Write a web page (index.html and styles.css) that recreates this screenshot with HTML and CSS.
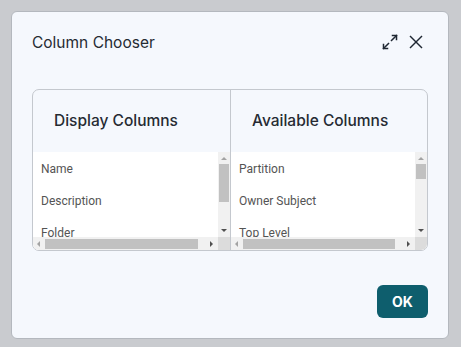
FILE: index.html
```html
<!DOCTYPE html>
<html lang="en">
<head>
    <meta charset="UTF-8">
    <meta name="viewport" content="width=device-width, initial-scale=1.0">
    <title>Column Chooser</title>
    <link rel="stylesheet" href="styles.css">
</head>
<body>

    <div class="dialog">
        <!-- header start -->
        <div class="dialog-header">
            <h1 class="dialog-title">Column Chooser</h1>
            <div class="dialog-tools">
                <button class="tool-btn" title="Maximize">
                    <svg width="18" height="18" viewBox="0 0 18 18" fill="none" stroke="#1f2733" stroke-width="1.5" stroke-linecap="square">
                        <path d="M11.5 2.5h4v4"/>
                        <path d="M15.5 2.5l-5 5"/>
                        <path d="M6.5 15.5h-4v-4"/>
                        <path d="M2.5 15.5l5-5"/>
                    </svg>
                </button>
                <button class="tool-btn" title="Close">
                    <svg width="18" height="18" viewBox="0 0 18 18" fill="none" stroke="#1f2733" stroke-width="1.4">
                        <path d="M3 3l12 12"/>
                        <path d="M15 3L3 15"/>
                    </svg>
                </button>
            </div>
        </div>
        <!-- header end -->

        <!-- chooser panel start -->
        <div class="chooser">
            <div class="pane">
                <div class="pane-head">Display Columns</div>
                <div class="pane-body">
                    <ul class="col-list">
                        <li>Name</li>
                        <li>Description</li>
                        <li>Folder</li>
                    </ul>
                    <div class="vscroll">
                        <span class="arrow arrow-up"></span>
                        <div class="vtrack"><div class="vthumb thumb-long"></div></div>
                        <span class="arrow arrow-down"></span>
                    </div>
                    <div class="hscroll">
                        <span class="arrow arrow-left"></span>
                        <div class="htrack"><div class="hthumb"></div></div>
                        <span class="arrow arrow-right"></span>
                    </div>
                    <div class="corner"></div>
                </div>
            </div>

            <div class="pane">
                <div class="pane-head">Available Columns</div>
                <div class="pane-body">
                    <ul class="col-list">
                        <li>Partition</li>
                        <li>Owner Subject</li>
                        <li>Top Level</li>
                    </ul>
                    <div class="vscroll">
                        <span class="arrow arrow-up"></span>
                        <div class="vtrack"><div class="vthumb thumb-short"></div></div>
                        <span class="arrow arrow-down"></span>
                    </div>
                    <div class="hscroll">
                        <span class="arrow arrow-left"></span>
                        <div class="htrack"><div class="hthumb"></div></div>
                        <span class="arrow arrow-right"></span>
                    </div>
                    <div class="corner"></div>
                </div>
            </div>
        </div>
        <!-- chooser panel end -->

        <div class="dialog-footer">
            <button class="ok-btn">OK</button>
        </div>
    </div>

</body>
</html>
```

FILE: styles.css
```css
body {
    margin: 0;
    padding: 11px;
    background: #c9cbcf;
    font-family: Inter, "Noto Sans", sans-serif;
}

.dialog {
    width: 438px;
    height: 328px;
    box-sizing: border-box;
    background: #f5f8fd;
    border: 1px solid #b4b8be;
    border-radius: 6px;
    padding: 19px 20px 20px 20px;
    display: flex;
    flex-direction: column;
}

.dialog-header {
    height: 22px;
    display: flex;
    align-items: center;
    justify-content: space-between;
}

.dialog-title {
    margin: 0;
    font-size: 15.5px;
    font-weight: 400;
    color: #262b33;
}

.dialog-tools {
    display: flex;
    gap: 8px;
    margin-right: 3px;
}

.tool-btn {
    background: transparent;
    border: none;
    padding: 0;
    width: 18px;
    height: 18px;
    display: flex;
    cursor: pointer;
}

/* two column chooser */

.chooser {
    margin-top: 36px;
    height: 162px;
    box-sizing: border-box;
    border: 1px solid #c4c8ce;
    border-radius: 7px;
    overflow: hidden;
    display: grid;
    grid-template-columns: 1fr 1fr;
}

.pane {
    display: grid;
    grid-template-rows: 62px minmax(0, 1fr);
    min-width: 0;
    min-height: 0;
}

.pane + .pane {
    border-left: 1px solid #c4c8ce;
}

.pane-head {
    display: flex;
    align-items: center;
    padding-left: 21px;
    padding-bottom: 2px;
    font-size: 15.5px;
    font-weight: 450;
    color: #262b33;
}

.pane-body {
    background: #fff;
    display: grid;
    grid-template-columns: minmax(0, 1fr) 12px;
    grid-template-rows: minmax(0, 1fr) 13px;
    overflow: hidden;
    min-height: 0;
}

.col-list {
    list-style: none;
    margin: 0;
    padding: 1px 0 0 0;
    overflow: hidden;
    min-height: 0;
    font-family: Roboto, "Liberation Sans", sans-serif;
    font-size: 12px;
    color: #545454;
}

.col-list li {
    height: 32px;
    line-height: 32px;
    padding-left: 8px;
}

/* fake scrollbars */

.vscroll {
    background: #f1f1f1;
    display: flex;
    flex-direction: column;
    align-items: center;
    min-height: 0;
}

.vtrack {
    flex: 1;
    width: 100%;
    padding: 0 1px;
    box-sizing: border-box;
}

.vthumb {
    background: #c1c1c1;
}

.thumb-long {
    height: 38px;
}

.thumb-short {
    height: 15px;
}

.hscroll {
    background: #f1f1f1;
    display: flex;
    align-items: center;
}

.htrack {
    flex: 1;
    height: 100%;
    padding: 2px 0 1px;
    box-sizing: border-box;
}

.hthumb {
    height: 100%;
    background: #c1c1c1;
    margin-left: 1px;
    margin-right: 8px;
}

.corner {
    background: #dcdcdc;
}

.arrow {
    width: 0;
    height: 0;
    border-style: solid;
    flex: none;
}

.arrow-up {
    margin: 5px 0 4px;
    border-width: 0 3px 3px 3px;
    border-color: transparent transparent #a3a3a3 transparent;
}

.arrow-down {
    margin: 4px 0 5px;
    border-width: 3px 3px 0 3px;
    border-color: #505050 transparent transparent transparent;
}

.arrow-left {
    margin: 0 4px 0 4px;
    border-width: 3px 3px 3px 0;
    border-color: transparent #a3a3a3 transparent transparent;
}

.arrow-right {
    margin: 0 5px 0 4px;
    border-width: 3px 0 3px 3px;
    border-color: transparent transparent transparent #505050;
}

/* footer */

.dialog-footer {
    margin-top: auto;
    display: flex;
    justify-content: flex-end;
}

.ok-btn {
    width: 51px;
    height: 33px;
    border: none;
    border-radius: 6px;
    background: #0e5e6d;
    color: #fff;
    font-family: Inter, "Noto Sans", sans-serif;
    font-size: 14px;
    font-weight: 700;
    cursor: pointer;
}
```
